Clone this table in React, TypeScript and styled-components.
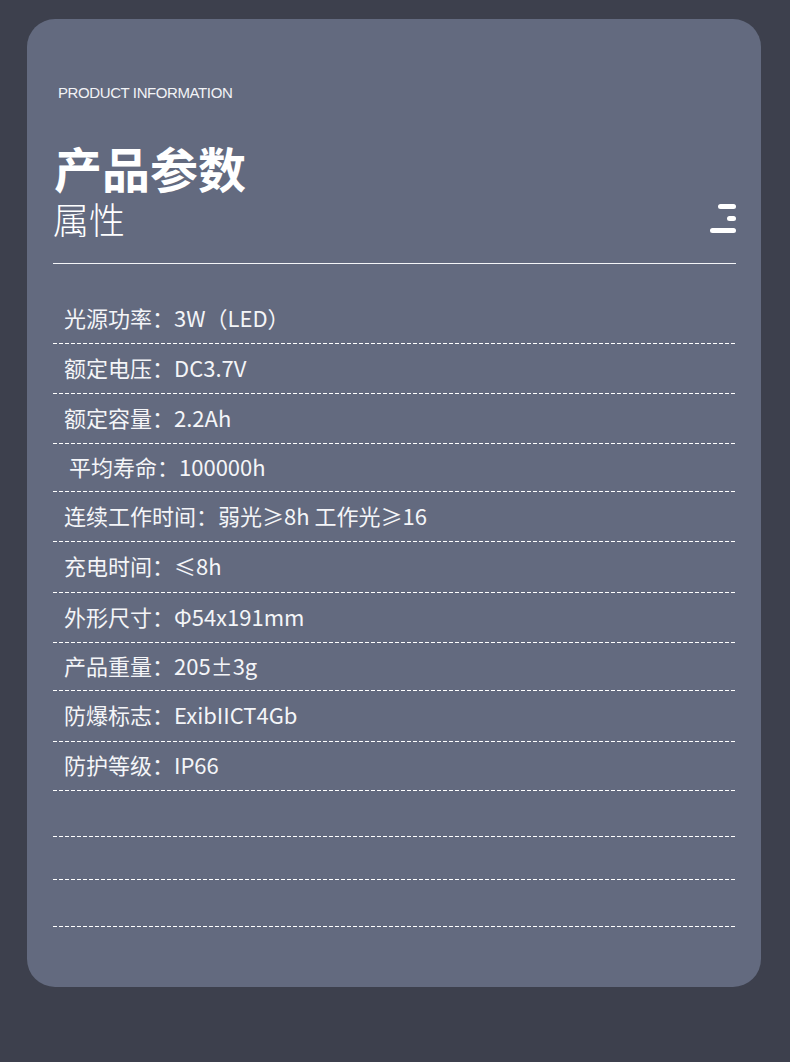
import styled, { createGlobalStyle } from 'styled-components';

const GlobalStyle = createGlobalStyle`
  html, body {
    margin: 0;
    padding: 0;
    background: #3d404d;
  }
  body {
    font-family: "Noto Sans CJK SC", "Noto Sans", sans-serif;
  }
`;

const specs = [
  { text: '光源功率：3W（LED）', h: 50 },
  { text: '额定电压：DC3.7V', h: 50 },
  { text: '额定容量：2.2Ah', h: 50 },
  { text: '平均寿命：100000h', h: 48, indent: true },
  { text: '连续工作时间：弱光≥8h 工作光≥16', h: 50 },
  { text: '充电时间：≤8h', h: 51 },
  { text: '外形尺寸：Φ54x191mm', h: 50 },
  { text: '产品重量：205±3g', h: 48 },
  { text: '防爆标志：ExibIICT4Gb', h: 51 },
  { text: '防护等级：IP66', h: 49 },
  { text: '', h: 46 },
  { text: '', h: 43 },
  { text: '', h: 47 },
];

const MenuIcon = () => (
  <svg width="26" height="29" viewBox="0 0 26 29" fill="#ffffff">
    <rect x="8" y="0" width="18" height="5" rx="2.5" />
    <rect x="17" y="12" width="9" height="5" rx="2.5" />
    <rect x="0" y="24" width="26" height="5" rx="2.5" />
  </svg>
);

const App = () => {
  return (
    <Page>
      <GlobalStyle />
      <Card>
        <Eyebrow>PRODUCT INFORMATION</Eyebrow>
        <TitleRow>
          <div>
            <Title>产品参数</Title>
            <Subtitle>属性</Subtitle>
          </div>
          <IconWrap>
            <MenuIcon />
          </IconWrap>
        </TitleRow>
        <Rule />
        <SpecList>
          {specs.map((s, i) => (
            <SpecRow key={i} $h={s.h} $indent={!!s.indent}>
              {s.text}
            </SpecRow>
          ))}
        </SpecList>
      </Card>
    </Page>
  );
};

export default App;

const Page = styled.div`
  padding: 19px 29px 75px 27px;
  min-height: 1062px;
  box-sizing: border-box;
`;

const Card = styled.div`
  background: #636a7f;
  border-radius: 28px;
  padding: 64px 25px 60px 26px;
  color: #ffffff;
`;

const Eyebrow = styled.div`
  font-family: "Liberation Sans", "Noto Sans", sans-serif;
  font-size: 15px;
  line-height: 20px;
  letter-spacing: -0.4px;
  color: #f2f3f6;
  margin-left: 5px;
`;

const TitleRow = styled.div`
  display: flex;
  justify-content: space-between;
  align-items: flex-end;
  margin-top: 39px;
`;

const Title = styled.div`
  font-size: 48px;
  font-weight: 700;
  line-height: 50px;
  margin-left: 1px;
`;

const Subtitle = styled.div`
  font-size: 36px;
  font-weight: 300;
  line-height: 44px;
  margin-top: 4px;
`;

const IconWrap = styled.div`
  display: flex;
  margin-bottom: 7px;
`;

const Rule = styled.div`
  height: 1px;
  background: #f4f5f8;
  margin-top: 23px;
`;

const SpecList = styled.div`
  padding-top: 30px;
`;

const SpecRow = styled.div<{ $h: number; $indent: boolean }>`
  height: ${({ $h }) => $h}px;
  box-sizing: border-box;
  display: flex;
  align-items: center;
  padding-left: ${({ $indent }) => ($indent ? 16 : 11)}px;
  padding-bottom: 5px;
  font-size: 22px;
  color: #f4f5f8;
  white-space: pre;
  background-image: repeating-linear-gradient(
    to right,
    #ffffff 0,
    #ffffff 4px,
    transparent 4px,
    transparent 6px
  );
  background-size: 100% 1px;
  background-position: left bottom;
  background-repeat: no-repeat;
`;
